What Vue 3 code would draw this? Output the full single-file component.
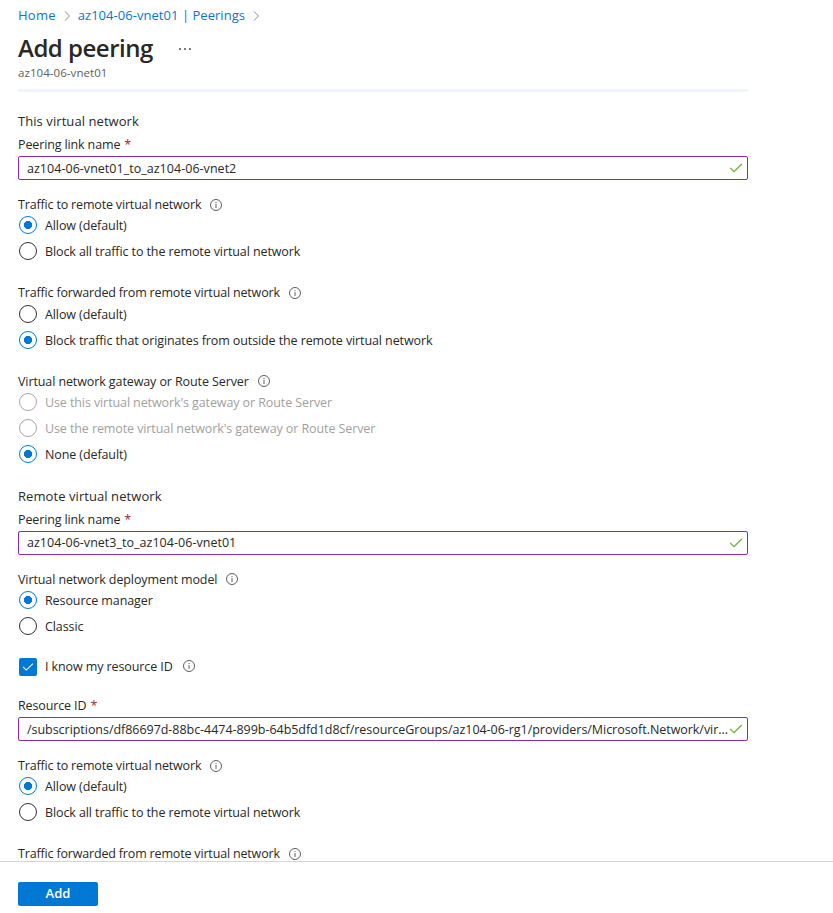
<script setup>
import { h } from 'vue'

const InfoIcon = () =>
  h('svg', { class: 'info', viewBox: '0 0 12 12', 'aria-hidden': 'true' }, [
    h('circle', { cx: 6, cy: 6, r: 5.5, fill: 'none', stroke: '#605e5c' }),
    h('path', { d: 'M6 5v4M6 3v1', fill: 'none', stroke: '#605e5c' }),
  ])

const CheckIcon = () =>
  h('svg', { class: 'check', viewBox: '0 0 14 10', 'aria-hidden': 'true' }, [
    h('path', { d: 'M1.2 4.8 5 8.6 12.8 1', fill: 'none', stroke: 'currentColor', 'stroke-width': 1.2 }),
  ])

const trafficOptions = [
  { text: 'Allow (default)', on: true },
  { text: 'Block all traffic to the remote virtual network' },
]

const sections = [
  {
    title: 'This virtual network',
    fields: [
      { type: 'input', label: 'Peering link name', value: 'az104-06-vnet01_to_az104-06-vnet2' },
      { type: 'radio', label: 'Traffic to remote virtual network', kind: 'outgoing', options: trafficOptions },
      {
        type: 'radio',
        label: 'Traffic forwarded from remote virtual network',
        kind: 'forwarded',
        options: [
          { text: 'Allow (default)' },
          { text: 'Block traffic that originates from outside the remote virtual network', on: true },
        ],
      },
      {
        type: 'radio',
        label: 'Virtual network gateway or Route Server',
        options: [
          { text: "Use this virtual network's gateway or Route Server", disabled: true },
          { text: "Use the remote virtual network's gateway or Route Server", disabled: true },
          { text: 'None (default)', on: true },
        ],
      },
    ],
  },
  {
    title: 'Remote virtual network',
    fields: [
      { type: 'input', label: 'Peering link name', kind: 'raised', value: 'az104-06-vnet3_to_az104-06-vnet01' },
      {
        type: 'radio',
        label: 'Virtual network deployment model',
        options: [{ text: 'Resource manager', on: true }, { text: 'Classic' }],
      },
      { type: 'checkbox', label: 'I know my resource ID' },
      {
        type: 'input',
        label: 'Resource ID',
        kind: 'long',
        value:
          '/subscriptions/df86697d-88bc-4474-899b-64b5dfd1d8cf/resourceGroups/az104-06-rg1/providers/Microsoft.Network/vir...',
      },
      { type: 'radio', label: 'Traffic to remote virtual network', kind: 'outgoing', options: trafficOptions },
      { type: 'radio', label: 'Traffic forwarded from remote virtual network', kind: 'forwarded', options: [] },
    ],
  },
]
</script>

<template>
  <div class="page">
    <header class="head">
      <nav class="crumbs">
        <a>Home</a>
        <svg class="chev" viewBox="0 0 7 10"><path d="M1 .5 5.5 5 1 9.5" /></svg>
        <a>az104-06-vnet01 | Peerings</a>
        <svg class="chev" viewBox="0 0 7 10"><path d="M1 .5 5.5 5 1 9.5" /></svg>
      </nav>
      <div class="title-row">
        <h1>Add peering</h1>
        <span class="more"><i /><i /><i /></span>
      </div>
      <div class="subtitle">az104-06-vnet01</div>
      <div class="rule" />
    </header>

    <main class="form">
      <section v-for="s in sections" :key="s.title" class="section">
        <h2>{{ s.title }}</h2>
        <div v-for="(f, i) in s.fields" :key="i" :class="['field', 'field-' + f.type, f.kind]">
          <template v-if="f.type === 'input'">
            <div class="label"><span>{{ f.label }}</span><span class="req">*</span></div>
            <div class="box">
              <span class="value">{{ f.value }}</span>
              <CheckIcon />
            </div>
          </template>
          <template v-else-if="f.type === 'radio'">
            <div class="info-label"><span>{{ f.label }}</span><InfoIcon /></div>
            <div
              v-for="o in f.options"
              :key="o.text"
              :class="['option', { on: o.on, disabled: o.disabled }]"
            >
              <span class="dot" /><span class="option-text">{{ o.text }}</span>
            </div>
          </template>
          <template v-else>
            <span class="tick"><CheckIcon /></span>
            <span>{{ f.label }}</span>
            <InfoIcon />
          </template>
        </div>
      </section>
    </main>

    <footer class="foot"><button>Add</button></footer>
  </div>
</template>

<style>
body {
  background: #fff;
}
</style>

<style scoped>
.page {
  box-sizing: border-box;
  width: 833px;
  height: 913px;
  display: flex;
  flex-direction: column;
  overflow: hidden;
  color: #292827;
  font: 12.5px/18px 'Open Sans', 'Noto Sans', sans-serif;
  letter-spacing: -0.1px;
  white-space: nowrap;
}
.head {
  flex: none;
  width: 730px;
  padding: 6px 0 0 18px;
}
.crumbs {
  display: flex;
  align-items: center;
  height: 18px;
  font-size: 13px;
  letter-spacing: 0.04px;
  color: #0b74cf;
}
.crumbs a:first-child {
  letter-spacing: 0.25px;
}
.chev {
  width: 7px;
  height: 10px;
  margin: 1px 7px 0 8px;
  fill: none;
  stroke: #8a8886;
}
.title-row {
  display: flex;
  align-items: center;
  height: 32px;
  margin-top: 9px;
}
h1 {
  margin: -2px 0 0;
  font-size: 24px;
  line-height: 32px;
  font-weight: 600;
  letter-spacing: -0.49px;
}
.more {
  display: flex;
  gap: 3px;
  margin-left: 26px;
}
.more i {
  width: 2px;
  height: 2px;
  background: #7a7876;
}
.subtitle {
  height: 16px;
  font-size: 11.5px;
  line-height: 16px;
  letter-spacing: 0.06px;
  color: #605e5c;
}
.rule {
  height: 3px;
  margin-top: 8px;
  border-radius: 2px;
  background: #eff4fe;
}
.form {
  flex: 1;
  min-height: 0;
  overflow: hidden;
  padding: 20px 0 0 18px;
}
.section + .section {
  margin-top: 20px;
}
h2 {
  margin: 0 0 5px;
  font-size: 13px;
  line-height: 18px;
  font-weight: 400;
  letter-spacing: 0.07px;
}
.field {
  width: 730px;
}
.label {
  display: flex;
  height: 18px;
  line-height: 20px;
  letter-spacing: -0.13px;
}
.req {
  margin-left: 4px;
  color: #a4262c;
}
.info-label {
  display: flex;
  height: 17px;
  line-height: 19px;
}
.forwarded .info-label {
  line-height: 17px;
}
.forwarded .info-label,
.outgoing .info-label {
  letter-spacing: -0.17px;
}
.info {
  flex: none;
  width: 12px;
  height: 12px;
  margin: 3px 0 0 9px;
}
.outgoing .info {
  margin-top: 4px;
}
.box {
  box-sizing: border-box;
  display: flex;
  align-items: center;
  justify-content: space-between;
  height: 24px;
  margin-top: 3px;
  padding: 0 4px 0 8px;
  border: 1px solid #8c2bab;
  border-radius: 2px;
}
.value {
  line-height: 20px;
  padding-top: 2px;
  letter-spacing: 0.03px;
}
.raised .value {
  padding-top: 0;
}
.long .value {
  letter-spacing: -0.04px;
}
.check {
  flex: none;
  width: 14px;
  height: 10px;
  color: #6bb02c;
}
.option {
  display: flex;
  align-items: center;
  gap: 8px;
  height: 26px;
  padding-left: 1px;
}
.option-text {
  padding-top: 2px;
}
.dot {
  box-sizing: border-box;
  width: 18px;
  height: 18px;
  border: 1px solid #323130;
  border-radius: 50%;
}
.on .dot {
  border-color: #0078d4;
  background: radial-gradient(circle, #0078d4 3.8px, transparent 4.4px);
}
.disabled {
  color: #a19f9d;
}
.disabled .dot {
  border-color: #a8a6a4;
}
.field-input + .field-radio {
  margin-top: 15px;
}
.field-radio + .field-radio {
  margin-top: 20px;
}
.field-radio + .field-radio + .field-radio {
  margin-top: 19px;
}
.field-checkbox {
  display: flex;
  align-items: center;
  height: 18px;
  margin-top: 19px;
  padding-left: 1px;
}
.field-checkbox .info {
  margin: -2px 0 0 10px;
}
.tick {
  display: flex;
  align-items: center;
  justify-content: center;
  width: 18px;
  height: 18px;
  margin-right: 8px;
  border-radius: 2px;
  background: #0078d4;
}
.tick .check {
  width: 12px;
  color: #fff;
}
.field-checkbox + .field-input {
  margin-top: 20px;
}
.foot {
  flex: none;
  box-sizing: border-box;
  height: 52px;
  padding: 20px 0 0 18px;
  border-top: 1px solid #d6d6d6;
  background: #fff;
}
button {
  display: block;
  width: 80px;
  height: 24px;
  padding: 0 0 2px;
  border: 0;
  border-radius: 2px;
  background: #0078d4;
  color: #fff;
  font: 600 13px/22px 'Open Sans', 'Noto Sans', sans-serif;
}
</style>
